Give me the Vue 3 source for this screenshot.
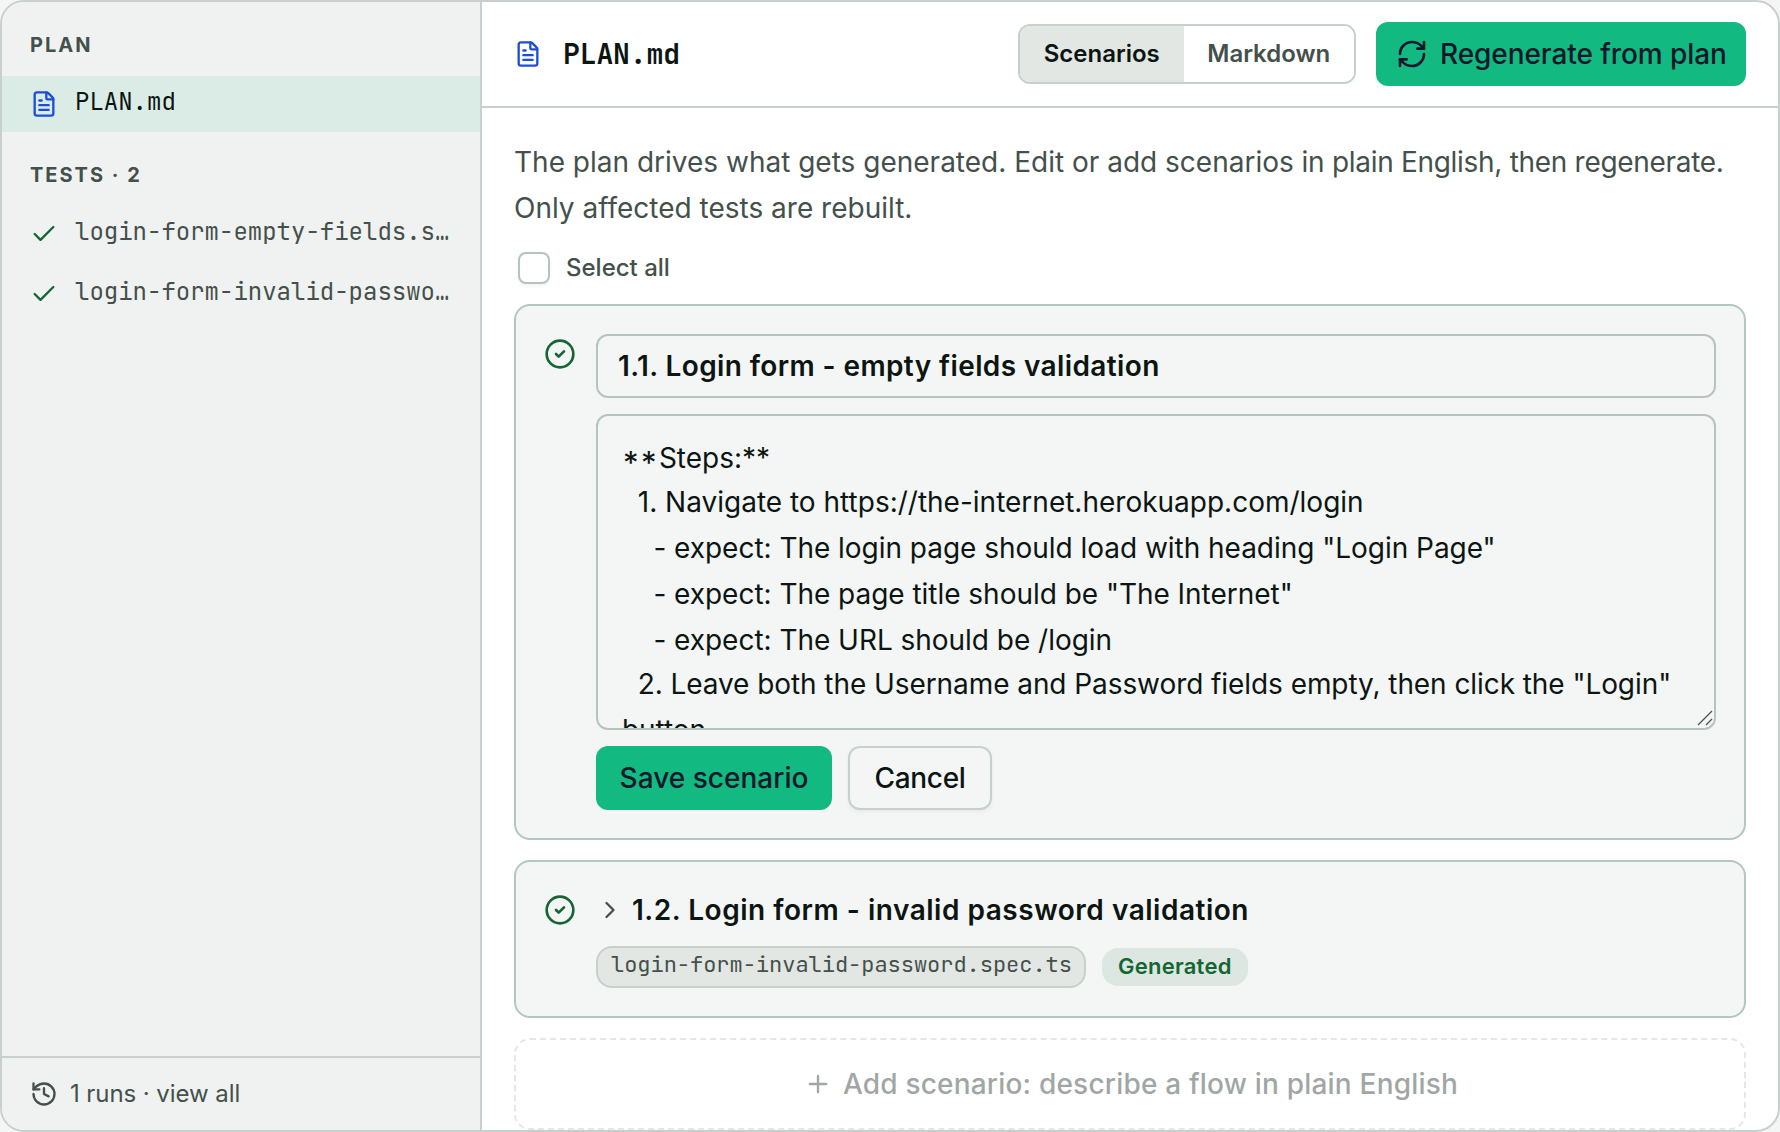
<template>
  <div class="window">
    <aside class="sidebar">
      <div class="section-label">PLAN</div>
      <div class="file-row plan-row" :class="{ active: selected === 'plan' }" @click="selected = 'plan'">
        <svg class="icon icon-file" viewBox="0 0 24 24">
          <path d="M6 22a2 2 0 0 1-2-2V4a2 2 0 0 1 2-2h8a2.4 2.4 0 0 1 1.704.706l3.588 3.588A2.4 2.4 0 0 1 20 8v12a2 2 0 0 1-2 2z" />
          <path d="M14 2v5a1 1 0 0 0 1 1h5" />
          <path d="M10 9H8M16 13H8M16 17H8" />
        </svg>
        <span class="file-name">PLAN.md</span>
      </div>

      <div class="section-label tests-label">TESTS · {{ tests.length }}</div>
      <div
        v-for="test in tests"
        :key="test"
        class="file-row test-row"
        :class="{ active: selected === test }"
        @click="selected = test"
      >
        <svg class="icon icon-ok" viewBox="0 0 24 24">
          <path d="M20 6 9 17l-5-5" />
        </svg>
        <span class="file-name">{{ test }}</span>
      </div>

      <div class="sidebar-footer">
        <svg class="icon" viewBox="0 0 24 24">
          <path d="M3 12a9 9 0 1 0 9-9 9.75 9.75 0 0 0-6.74 2.74L3 8" />
          <path d="M3 3v5h5" />
          <path d="M12 7v5l4 2" />
        </svg>
        <span class="runs">1 runs · view all</span>
      </div>
    </aside>

    <main class="main">
      <header class="toolbar">
        <svg class="icon icon-file" viewBox="0 0 24 24">
          <path d="M6 22a2 2 0 0 1-2-2V4a2 2 0 0 1 2-2h8a2.4 2.4 0 0 1 1.704.706l3.588 3.588A2.4 2.4 0 0 1 20 8v12a2 2 0 0 1-2 2z" />
          <path d="M14 2v5a1 1 0 0 0 1 1h5" />
          <path d="M10 9H8M16 13H8M16 17H8" />
        </svg>
        <h1 class="title">PLAN.md</h1>
        <div class="segmented">
          <button
            v-for="tab in tabs"
            :key="tab"
            class="segment"
            :class="{ on: tab === view }"
            @click="view = tab"
          >{{ tab }}</button>
        </div>
        <button class="btn btn-primary btn-regenerate">
          <svg class="icon icon-refresh" viewBox="0 0 24 24">
            <path d="M3 12a9 9 0 0 1 9-9 9.75 9.75 0 0 1 6.74 2.74L21 8" />
            <path d="M21 3v5h-5" />
            <path d="M21 12a9 9 0 0 1-9 9 9.75 9.75 0 0 1-6.74-2.74L3 16" />
            <path d="M8 16H3v5" />
          </svg>
          <span>Regenerate from plan</span>
        </button>
      </header>

      <section class="content">
        <p class="intro">
          The plan drives what gets generated. Edit or add scenarios
          <span class="intro-tail">in plain English, then regenerate.</span>
          Only affected tests are rebuilt.
        </p>

        <label class="select-all">
          <input v-model="allSelected" type="checkbox" class="checkbox" />
          <span class="select-text">Select all</span>
        </label>

        <article class="card">
          <svg class="icon status" viewBox="0 0 24 24">
            <circle cx="12" cy="12" r="10" />
            <path d="m9 12 2 2 4-4" />
          </svg>
          <div class="card-body">
            <input v-model="title" class="title-input" type="text" />
            <div class="steps" contenteditable="true" spellcheck="false">
              <div class="line"><span class="marker">**</span>Steps:**</div>
              <div
                v-for="(step, i) in steps"
                :key="i"
                class="line"
                :class="step.kind"
              >{{ step.text }}</div>
              <svg class="grip" viewBox="0 0 16 16">
                <path d="M1 15 15 1M9 15l6-6" />
              </svg>
            </div>
            <div class="actions">
              <button class="btn btn-primary btn-save">Save scenario</button>
              <button class="btn btn-outline">Cancel</button>
            </div>
          </div>
        </article>

        <article class="card card-collapsed">
          <svg class="icon status" viewBox="0 0 24 24">
            <circle cx="12" cy="12" r="10" />
            <path d="m9 12 2 2 4-4" />
          </svg>
          <div class="card-body">
            <div class="scenario-title">
              <svg class="icon chevron" viewBox="0 0 24 24">
                <path d="m9 18 6-6-6-6" />
              </svg>
              <span>1.2. Login form - invalid password validation</span>
            </div>
            <div class="tags">
              <code class="chip">login-form-invalid-password.spec.ts</code>
              <span class="badge">Generated</span>
            </div>
          </div>
        </article>

        <button class="add-scenario">
          <svg class="icon" viewBox="0 0 24 24">
            <path d="M5 12h14M12 5v14" />
          </svg>
          <span>Add scenario: describe a flow in plain English</span>
        </button>
      </section>
    </main>
  </div>
</template>

<script setup>
import { ref } from 'vue';

const tests = [
  'login-form-empty-fields.spec.ts',
  'login-form-invalid-password.spec.ts'
];
const tabs = ['Scenarios', 'Markdown'];

const selected = ref('plan');
const view = ref('Scenarios');
const allSelected = ref(false);
const title = ref('1.1. Login form - empty fields validation');
const steps = ref([
  { kind: 'step', text: '  1. Navigate to https://the-internet.herokuapp.com/login' },
  { kind: 'expect', text: '    - expect: The login page should load with heading "Login Page"' },
  { kind: 'expect', text: '    - expect: The page title should be "The Internet"' },
  { kind: 'expect', text: '    - expect: The URL should be /login' },
  { kind: 'step long', text: '  2. Leave both the Username and Password fields empty, then click the "Login" button' }
]);
</script>

<style>
body {
  background: #f4f6f5;
}
</style>

<style scoped>
.window {
  display: flex;
  box-sizing: border-box;
  width: 1780px;
  height: 1132px;
  border: 2px solid #c8d0cd;
  border-radius: 24px;
  overflow: hidden;
  background: #fff;
  color: #0c1512;
  font-family: Inter, sans-serif;
  font-size: 28px;
}

.window * {
  box-sizing: border-box;
}

button,
input {
  font: inherit;
  color: inherit;
  margin: 0;
  outline: none;
}

.icon {
  flex: none;
  width: 28px;
  height: 28px;
  fill: none;
  stroke: currentColor;
  stroke-width: 2;
  stroke-linecap: round;
  stroke-linejoin: round;
}

.icon-file {
  color: #1d4ed8;
}

.icon-ok {
  color: #166534;
}

.icon-refresh {
  width: 32px;
  height: 32px;
}

/* sidebar */
.sidebar {
  display: flex;
  flex-direction: column;
  flex: none;
  width: 480px;
  padding-top: 28px;
  border-right: 2px solid #c8d0cd;
  background: #f0f2f1;
  color: #44504b;
}

.section-label {
  height: 46px;
  padding-left: 28px;
  font-size: 20px;
  font-weight: 700;
  line-height: 30px;
  letter-spacing: 2px;
}

.tests-label {
  height: 44px;
  margin-top: 28px;
}

.file-row {
  display: flex;
  align-items: center;
  gap: 17px;
  padding: 0 28px;
  font-family: "JetBrains Mono", "DejaVu Sans Mono", monospace;
  font-size: 24px;
  cursor: pointer;
}

.plan-row {
  height: 56px;
}

.test-row {
  height: 60px;
}

.file-row.active {
  background: #daece5;
  color: #0c1512;
}

.file-name {
  min-width: 0;
  overflow: hidden;
  padding-bottom: 6px;
  text-overflow: ellipsis;
  white-space: nowrap;
}

.sidebar-footer {
  display: flex;
  align-items: center;
  gap: 12px;
  height: 74px;
  margin-top: auto;
  padding-left: 28px;
  border-top: 2px solid #c8d0cd;
  font-size: 24px;
  letter-spacing: -0.07px;
}

.runs {
  padding-bottom: 2px;
}

/* main column */
.main {
  display: flex;
  flex-direction: column;
  flex: 1;
  min-width: 0;
}

.toolbar {
  display: flex;
  align-items: center;
  flex: none;
  height: 106px;
  padding: 0 32px;
  border-bottom: 2px solid #c8d0cd;
}

.title {
  flex: 1;
  margin: 0 0 0 21px;
  padding-bottom: 2px;
  font-family: "JetBrains Mono", "DejaVu Sans Mono", monospace;
  font-size: 28px;
  font-weight: 600;
  letter-spacing: -0.1px;
}

.segmented {
  display: flex;
  width: 338px;
  height: 60px;
  margin-right: 20px;
  border: 2px solid #c8d0cd;
  border-radius: 12px;
  overflow: hidden;
}

.segment {
  flex: auto;
  padding: 0 0 2px;
  border: 0;
  background: #fff;
  color: #44504b;
  font-size: 24px;
  font-weight: 600;
}

.segment.on {
  background: #e2e7e3;
  color: #0c1512;
}

.btn {
  display: flex;
  align-items: center;
  justify-content: center;
  height: 64px;
  padding: 0;
  border: 0;
  border-radius: 12px;
  font-weight: 500;
}

.btn-primary {
  background: #12b981;
  color: #0f172a;
}

.btn-regenerate {
  justify-content: flex-start;
  gap: 12px;
  width: 370px;
  padding-left: 20px;
  letter-spacing: -0.08px;
}

.btn-save {
  width: 236px;
  letter-spacing: 0.02px;
}

.btn-outline {
  width: 144px;
  border: 2px solid #c8d0cd;
  background: #f4f6f5;
  box-shadow: 0 2px 4px rgba(0, 0, 0, 0.05);
  letter-spacing: -0.3px;
}

.content {
  display: flex;
  flex-direction: column;
  flex: 1;
  min-height: 0;
  padding: 32px 32px 0;
  overflow: hidden;
}

.intro {
  margin: 0;
  color: #44504b;
  line-height: 45.5px;
}

.intro-tail {
  letter-spacing: -0.3px;
}

.select-all {
  display: flex;
  align-items: center;
  gap: 16px;
  height: 40px;
  margin: 17px 0 16px;
  padding-left: 4px;
  color: #44504b;
  font-size: 24px;
  font-weight: 500;
}

.select-text {
  padding-bottom: 2px;
}

.checkbox {
  appearance: none;
  width: 32px;
  height: 32px;
  border: 2px solid #b7c3c0;
  border-radius: 8px;
  background: #fff;
  box-shadow: 0 2px 4px rgba(0, 0, 0, 0.05);
}

.card {
  display: flex;
  flex: none;
  gap: 20px;
  height: 536px;
  margin-bottom: 20px;
  padding: 28px;
  border: 2px solid #b0c9bb;
  border-radius: 16px;
  background: #f4f6f5;
}

.card-collapsed {
  height: 158px;
}

.status {
  width: 32px;
  height: 32px;
  margin-top: 4px;
  color: #166534;
}

.card-body {
  display: flex;
  flex-direction: column;
  flex: 1;
  gap: 16px;
  min-width: 0;
}

.title-input {
  height: 64px;
  padding: 0 20px;
  border: 2px solid #b7c3c0;
  border-radius: 12px;
  background: transparent;
  font-weight: 600;
  letter-spacing: 0.39px;
}

.steps {
  position: relative;
  height: 316px;
  padding: 19px 24px;
  border: 2px solid #b7c3c0;
  border-radius: 12px;
  line-height: 46px;
  overflow: hidden;
  outline: none;
  white-space: pre-wrap;
}

/* opening bold marker, wider and set lower than the closing one */
.marker {
  padding-left: 1px;
  font-size: 31px;
  line-height: 0;
  letter-spacing: 2.4px;
  vertical-align: -6px;
}

/* numbered steps sit slightly closer to the line above */
.line.step {
  margin-top: -2px;
}

.line.expect {
  letter-spacing: -0.03px;
}

.line.long {
  letter-spacing: -0.07px;
}

.grip {
  position: absolute;
  right: 1px;
  bottom: 2px;
  width: 16px;
  height: 16px;
  fill: none;
  stroke: #4d5350;
  stroke-width: 1.3;
}

.actions {
  display: flex;
  gap: 16px;
}

.scenario-title {
  display: flex;
  align-items: center;
  gap: 8px;
  height: 40px;
  font-weight: 600;
  letter-spacing: 0.52px;
}

.chevron {
  color: #44504b;
}

.tags {
  display: flex;
  align-items: center;
  gap: 16px;
}

.chip {
  width: 490px;
  height: 42px;
  padding: 0 0 0 13px;
  border: 2px solid #c8d0cd;
  border-radius: 16px;
  background: #e2e7e3;
  color: #44504b;
  font-family: "JetBrains Mono", "DejaVu Sans Mono", monospace;
  font-size: 22px;
  line-height: 33px;
  letter-spacing: -0.03px;
}

.badge {
  height: 38px;
  padding: 0 16px;
  border-radius: 16px;
  background: #dce7e1;
  color: #166534;
  font-size: 22px;
  font-weight: 600;
  line-height: 37px;
  letter-spacing: 0.25px;
}

.add-scenario {
  display: flex;
  align-items: center;
  justify-content: center;
  flex: none;
  gap: 11px;
  height: 92px;
  padding: 0 0 0 2px;
  border: 2px dashed #c8d0cd;
  border-radius: 16px;
  background: transparent;
  color: #44504b;
  font-weight: 500;
  letter-spacing: 0.2px;
  opacity: 0.5;
}
</style>
